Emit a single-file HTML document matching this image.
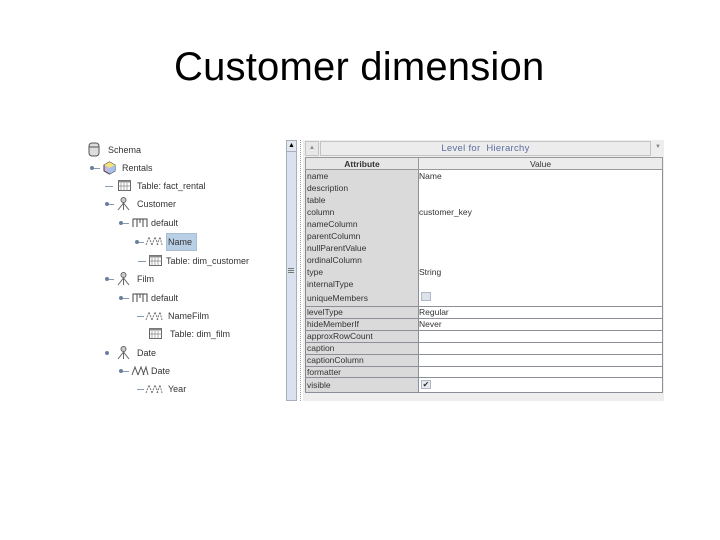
<!DOCTYPE html>
<html><head><meta charset="utf-8"><style>
*{margin:0;padding:0;box-sizing:border-box}
body{width:720px;height:540px;background:#fff;position:relative;overflow:hidden;font-family:"Liberation Sans",sans-serif}
.t{position:absolute;font-size:9px;color:#333;white-space:nowrap;line-height:10px}
.title{position:absolute;left:174px;top:42px;font-size:40px;color:#000;letter-spacing:0.2px;white-space:nowrap;line-height:50px}
.h{position:absolute;width:4px;height:4px;border-radius:50%;background:#6a7fa0}
.hl{position:absolute;height:1px;background:#8899b0}
.ic{position:absolute}
.a{position:absolute;font-size:8.5px;color:#333;left:307px;white-space:nowrap;line-height:10px}
.v{position:absolute;font-size:8.5px;color:#333;left:419px;white-space:nowrap;line-height:10px}
.gl{position:absolute;left:305px;width:358px;height:1px;background:#8a8f98}
</style></head><body>
<div class="title">Customer dimension</div>

<svg class="ic" style="left:88px;top:142px" width="12" height="15"><rect x="1" y="1" width="10" height="13" rx="3" fill="#ddd" stroke="#555"/><line x1="1" y1="5" x2="11" y2="5" stroke="#555"/></svg>
<div class="t" style="left:108px;top:145px">Schema</div>

<div class="h" style="left:90px;top:166px"></div><div class="hl" style="left:94px;top:168px;width:6px"></div>
<svg class="ic" style="left:103px;top:161px" width="13" height="14"><polygon points="6.5,1 12,4 12,10 6.5,13 1,10 1,4" fill="#c9b6e6" stroke="#444"/><polygon points="6.5,1 12,4 6.5,7 1,4" fill="#f4e27a"/><polygon points="6.5,7 12,4 12,10 6.5,13" fill="#9fc3ea"/></svg>
<div class="t" style="left:122px;top:163px">Rentals</div>

<div class="hl" style="left:105px;top:186px;width:8px"></div>
<svg class="ic" style="left:118px;top:180px" width="13" height="11"><rect x="0.5" y="0.5" width="12" height="10" fill="#fff" stroke="#666"/><rect x="0.5" y="0.5" width="12" height="2" fill="#888"/><path d="M3 3v8M6 3v8M9 3v8M1 6h12" stroke="#888" stroke-width=".7"/></svg>
<div class="t" style="left:137px;top:181px">Table: fact_rental</div>

<div class="h" style="left:105px;top:202px"></div><div class="hl" style="left:109px;top:204px;width:5px"></div>
<svg class="ic" style="left:117px;top:196px" width="13" height="15"><circle cx="6.5" cy="4" r="2.5" fill="#ccc" stroke="#666"/><path d="M6.5 7L1 14M6.5 7L12 14M6.5 7v7" stroke="#666" fill="none"/></svg>
<div class="t" style="left:137px;top:199px">Customer</div>

<div class="h" style="left:119px;top:221px"></div><div class="hl" style="left:123px;top:223px;width:6px"></div>
<svg class="ic" style="left:132px;top:217px" width="16" height="11"><path d="M1 10V2h14v8M5 2v8M11 2v8M8 2v4" stroke="#444" fill="none"/></svg>
<div class="t" style="left:151px;top:218px">default</div>

<div class="h" style="left:135px;top:240px"></div><div class="hl" style="left:139px;top:242px;width:5px"></div>
<svg class="ic" style="left:145px;top:235px" width="18" height="11"><path d="M1 10L4 2L7 10M7 10L10 2L13 10M12 10L15 2L17 10" stroke="#777" fill="none" stroke-dasharray="2 1"/></svg>
<div style="position:absolute;left:166px;top:233px;width:31px;height:18px;background:#b8cfe6;border:1px solid #a9bdd4"></div>
<div class="t" style="left:168px;top:237px">Name</div>

<div class="hl" style="left:138px;top:261px;width:8px"></div>
<svg class="ic" style="left:149px;top:255px" width="13" height="11"><rect x="0.5" y="0.5" width="12" height="10" fill="#fff" stroke="#666"/><rect x="0.5" y="0.5" width="12" height="2" fill="#888"/><path d="M3 3v8M6 3v8M9 3v8M1 6h12" stroke="#888" stroke-width=".7"/></svg>
<div class="t" style="left:166px;top:256px">Table: dim_customer</div>

<div class="h" style="left:105px;top:277px"></div><div class="hl" style="left:109px;top:279px;width:5px"></div>
<svg class="ic" style="left:117px;top:271px" width="13" height="15"><circle cx="6.5" cy="4" r="2.5" fill="#ccc" stroke="#666"/><path d="M6.5 7L1 14M6.5 7L12 14M6.5 7v7" stroke="#666" fill="none"/></svg>
<div class="t" style="left:137px;top:274px">Film</div>

<div class="h" style="left:119px;top:296px"></div><div class="hl" style="left:123px;top:298px;width:6px"></div>
<svg class="ic" style="left:132px;top:292px" width="16" height="11"><path d="M1 10V2h14v8M5 2v8M11 2v8M8 2v4" stroke="#444" fill="none"/></svg>
<div class="t" style="left:151px;top:293px">default</div>

<div class="hl" style="left:137px;top:316px;width:7px"></div>
<svg class="ic" style="left:145px;top:310px" width="18" height="11"><path d="M1 10L4 2L7 10M7 10L10 2L13 10M12 10L15 2L17 10" stroke="#777" fill="none" stroke-dasharray="2 1"/></svg>
<div class="t" style="left:168px;top:311px">NameFilm</div>

<svg class="ic" style="left:149px;top:328px" width="13" height="11"><rect x="0.5" y="0.5" width="12" height="10" fill="#fff" stroke="#666"/><rect x="0.5" y="0.5" width="12" height="2" fill="#888"/><path d="M3 3v8M6 3v8M9 3v8M1 6h12" stroke="#888" stroke-width=".7"/></svg>
<div class="t" style="left:170px;top:329px">Table: dim_film</div>

<div class="h" style="left:105px;top:351px"></div>
<svg class="ic" style="left:117px;top:345px" width="13" height="15"><circle cx="6.5" cy="4" r="2.5" fill="#ccc" stroke="#666"/><path d="M6.5 7L1 14M6.5 7L12 14M6.5 7v7" stroke="#666" fill="none"/></svg>
<div class="t" style="left:137px;top:348px">Date</div>

<div class="h" style="left:119px;top:369px"></div><div class="hl" style="left:123px;top:371px;width:6px"></div>
<svg class="ic" style="left:131px;top:365px" width="18" height="11"><path d="M1 10L4 2L7 10M7 10L10 2L13 10M12 10L15 2L17 10" stroke="#555" fill="none"/></svg>
<div class="t" style="left:151px;top:366px">Date</div>

<div class="hl" style="left:137px;top:389px;width:7px"></div>
<svg class="ic" style="left:145px;top:383px" width="18" height="11"><path d="M1 10L4 2L7 10M7 10L10 2L13 10M12 10L15 2L17 10" stroke="#777" fill="none" stroke-dasharray="2 1"/></svg>
<div class="t" style="left:168px;top:384px">Year</div>

<div style="position:absolute;left:286px;top:140px;width:11px;height:261px;background:#eef1f5;border:1px solid #a6afbc"></div>
<div style="position:absolute;left:286px;top:140px;width:11px;height:12px;background:#e4e8ee;border:1px solid #a6afbc;font-size:7px;text-align:center;line-height:10px">▲</div>
<div style="position:absolute;left:287px;top:152px;width:9px;height:248px;background:#d9e2ee"></div>
<div style="position:absolute;left:288px;top:268px;width:6px;height:1px;background:#777;box-shadow:0 2px #777,0 4px #777"></div>
<div style="position:absolute;left:300px;top:140px;width:1px;height:261px;border-left:1px dotted #999"></div>
<div style="position:absolute;left:303px;top:140px;width:361px;height:261px;background:#eeeeee"></div>
<div style="position:absolute;left:305px;top:141px;width:14px;height:15px;background:#e8e8e8;border:1px solid #c4c4c4;font-size:6px;color:#888;text-align:center;line-height:13px">▲</div>
<div style="position:absolute;left:320px;top:141px;width:331px;height:15px;background:#ececec;border:1px solid #c4c4c4;font-size:9.5px;color:#5a6f9e;text-align:center;line-height:14px;letter-spacing:0.3px">Level for&nbsp; Hierarchy</div>
<div style="position:absolute;left:653px;top:141px;width:10px;height:15px;font-size:6px;color:#888;text-align:center;line-height:13px">▼</div>

<div style="position:absolute;left:305px;top:157px;width:358px;height:235px;background:#fff;border-left:1px solid #888"></div>
<div style="position:absolute;left:305px;top:157px;width:114px;height:13px;background:#e6e6e6;border:1px solid #999;font-size:8.5px;font-weight:bold;text-align:center;line-height:12px;color:#333">Attribute</div>
<div style="position:absolute;left:418px;top:157px;width:245px;height:13px;background:#ececec;border:1px solid #999;font-size:8.5px;text-align:center;line-height:12px;color:#333">Value</div>
<div style="position:absolute;left:306px;top:170px;width:112px;height:222px;background:#dadada"></div>
<div style="position:absolute;left:418px;top:170px;width:1px;height:222px;background:#8a8f98"></div>
<div style="position:absolute;left:662px;top:170px;width:1px;height:222px;background:#8a8f98"></div>
<div class="gl" style="top:306px"></div><div class="gl" style="top:318px"></div><div class="gl" style="top:330px"></div>
<div class="gl" style="top:342px"></div><div class="gl" style="top:354px"></div><div class="gl" style="top:366px"></div>
<div class="gl" style="top:377px"></div><div class="gl" style="top:392px"></div>

<div class="a" style="top:171px">name</div><div class="v" style="top:171px">Name</div>
<div class="a" style="top:183px">description</div>
<div class="a" style="top:195px">table</div>
<div class="a" style="top:207px">column</div><div class="v" style="top:207px">customer_key</div>
<div class="a" style="top:219px">nameColumn</div>
<div class="a" style="top:231px">parentColumn</div>
<div class="a" style="top:243px">nullParentValue</div>
<div class="a" style="top:255px">ordinalColumn</div>
<div class="a" style="top:267px">type</div><div class="v" style="top:267px">String</div>
<div class="a" style="top:279px">internalType</div>
<div class="a" style="top:293px">uniqueMembers</div>
<div style="position:absolute;left:421px;top:292px;width:10px;height:9px;background:#dde3ea;border:1px solid #b0b8c4"></div>
<div class="a" style="top:307px">levelType</div><div class="v" style="top:307px">Regular</div>
<div class="a" style="top:319px">hideMemberIf</div><div class="v" style="top:319px">Never</div>
<div class="a" style="top:331px">approxRowCount</div>
<div class="a" style="top:343px">caption</div>
<div class="a" style="top:355px">captionColumn</div>
<div class="a" style="top:367px">formatter</div>
<div class="a" style="top:380px">visible</div>
<div style="position:absolute;left:421px;top:380px;width:10px;height:9px;background:#e6eaf0;border:1px solid #b0b8c4;font-size:8px;line-height:8px;text-align:center;color:#333">✔</div>
</body></html>
